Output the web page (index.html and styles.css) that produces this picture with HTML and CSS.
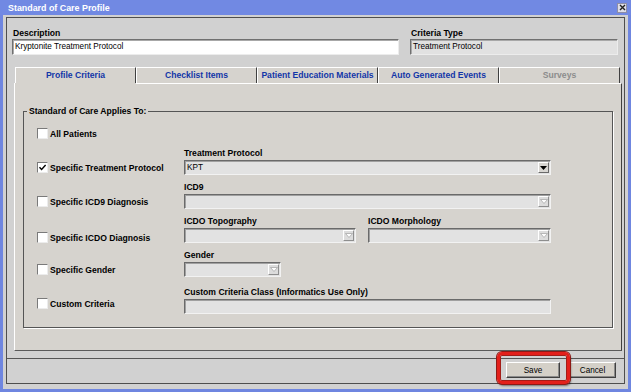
FILE: index.html
```html
<!DOCTYPE html>
<html>
<head>
<meta charset="utf-8">
<title>Standard of Care Profile</title>
<link rel="stylesheet" href="styles.css">
</head>
<body>
<div class="window">
  <div class="titlebar">
    <span class="title">Standard of Care Profile</span>
    <span class="close"><svg width="7" height="7" viewBox="0 0 7 7"><path d="M1 1L6 6M6 1L1 6" stroke="#222" stroke-width="1.4"/></svg></span>
  </div>
  <div class="frame">
    <div class="client">
      <div class="main">
        <div class="header">
          <div class="field">
            <span class="lbl">Description</span>
            <div class="input white">Kryptonite Treatment Protocol</div>
          </div>
          <div class="field">
            <span class="lbl">Criteria Type</span>
            <div class="input ro">Treatment Protocol</div>
          </div>
        </div>
        <div class="tabs">
          <div class="tab active">Profile Criteria</div>
          <div class="tab">Checklist Items</div>
          <div class="tab">Patient Education Materials</div>
          <div class="tab">Auto Generated Events</div>
          <div class="tab off">Surveys</div>
        </div>
        <div class="panel">
          <fieldset class="group">
            <legend>Standard of Care Applies To:</legend>
            <div class="rows">
              <div class="row">
                <span class="check"><span class="cb"></span>All Patients</span>
              </div>
              <div class="row">
                <span class="check"><span class="cb"><svg width="9" height="9" viewBox="0 0 9 9"><path d="M1.5 4.2L3.6 6.4L7.6 2" fill="none" stroke="#000" stroke-width="1.4"/></svg></span>Specific Treatment Protocol</span>
                <div class="fields">
                  <span class="flbl">Treatment Protocol</span>
                  <div class="combo"><span class="val">KPT</span><span class="arrow"><svg width="7" height="4" viewBox="0 0 7 4"><path d="M0 0H7L3.5 4Z" fill="#000"/></svg></span></div>
                </div>
              </div>
              <div class="row">
                <span class="check"><span class="cb"></span>Specific ICD9 Diagnosis</span>
                <div class="fields">
                  <span class="flbl">ICD9</span>
                  <div class="combo dis"><span class="val"></span><span class="arrow"><svg width="8" height="5" viewBox="0 0 8 5"><path d="M0.5 0.5H7.5L4 4.5Z" fill="#fdfdfd" stroke="#a8a8a8" stroke-width="0.8"/></svg></span></div>
                </div>
              </div>
              <div class="row icdo">
                <span class="check"><span class="cb"></span>Specific ICDO Diagnosis</span>
                <div class="fields split">
                  <div>
                    <span class="flbl">ICDO Topography</span>
                    <div class="combo dis"><span class="val"></span><span class="arrow"><svg width="8" height="5" viewBox="0 0 8 5"><path d="M0.5 0.5H7.5L4 4.5Z" fill="#fdfdfd" stroke="#a8a8a8" stroke-width="0.8"/></svg></span></div>
                  </div>
                  <div>
                    <span class="flbl">ICDO Morphology</span>
                    <div class="combo dis"><span class="val"></span><span class="arrow"><svg width="8" height="5" viewBox="0 0 8 5"><path d="M0.5 0.5H7.5L4 4.5Z" fill="#fdfdfd" stroke="#a8a8a8" stroke-width="0.8"/></svg></span></div>
                  </div>
                </div>
              </div>
              <div class="row">
                <span class="check"><span class="cb"></span>Specific Gender</span>
                <div class="fields">
                  <span class="flbl">Gender</span>
                  <div class="combo dis gender"><span class="val"></span><span class="arrow"><svg width="8" height="5" viewBox="0 0 8 5"><path d="M0.5 0.5H7.5L4 4.5Z" fill="#fdfdfd" stroke="#a8a8a8" stroke-width="0.8"/></svg></span></div>
                </div>
              </div>
              <div class="row last">
                <span class="check"><span class="cb"></span>Custom Criteria</span>
                <div class="fields">
                  <span class="flbl">Custom Criteria Class (Informatics Use Only)</span>
                  <div class="combo dis"><span class="val"></span></div>
                </div>
              </div>
            </div>
          </fieldset>
        </div>
      </div>
      <div class="buttonbar">
        <button class="btn save">Save</button>
        <button class="btn cancel">Cancel</button>
        <div class="highlight"></div>
      </div>
    </div>
  </div>
</div>
</body>
</html>
```
FILE: styles.css
```css
* { box-sizing: border-box; }
body {
  margin: 0;
  font-family: "Liberation Sans", Arial, sans-serif;
  background: #6f86e0;
}
.window {
  width: 631px;
  height: 392px;
  background: #6f86e0;
  display: flex;
  flex-direction: column;
}
.titlebar {
  height: 15px;
  flex: none;
  display: flex;
  align-items: center;
  justify-content: space-between;
  padding: 0 4px 0 8px;
  background: #7189e3;
  color: #fff;
  font-weight: bold;
  font-size: 8.9px;
}
.close {
  width: 10px;
  height: 10px;
  background: #dedee8;
  border: 1px solid #8e8ea6;
  display: flex;
  align-items: center;
  justify-content: center;
}
.close svg { display: block; }
.frame {
  flex: 1;
  margin: 0 3px 3px;
  background: #d1d1d1;
  padding: 2px 3px 5px;
  display: flex;
}
.client {
  flex: 1;
  border: 1px solid #4e4e4e;
  display: flex;
  flex-direction: column;
}
.main {
  height: 340px;
  flex: none;
}
.header {
  display: grid;
  grid-template-columns: 387px 208px;
  column-gap: 11px;
  padding: 10px 0 0 5px;
}
.lbl, .flbl {
  display: block;
  font-weight: bold;
  font-size: 8.6px;
  line-height: 11px;
  color: #000;
  white-space: nowrap;
}
.lbl { padding-left: 1px; }
.flbl { margin-bottom: 1px; }
.input {
  height: 16px;
  border: 1px solid;
  border-color: #707070 #ececec #ececec #707070;
  box-shadow: inset 1px 1px 0 #a8a8a8;
  font-size: 8.2px;
  line-height: 14px;
  padding-left: 2px;
  color: #000;
}
.input.white { background: #fff; }
.input.ro { background: #e1e1e1; }

.tabs {
  display: flex;
  margin: 12px 0 0 8px;
  width: 605px;
  height: 16px;
}
.tab {
  flex: 1;
  border-top: 1px solid #fff;
  border-left: 1px solid #fff;
  border-right: 1px solid #404040;
  text-align: center;
  font-weight: bold;
  font-size: 8.6px;
  line-height: 14px;
  color: #1236a8;
  background: #d6d3ce;
  white-space: nowrap;
}
.tab.active {
  position: relative;
  z-index: 1;
  box-shadow: 0 1px 0 #d6d3ce;
}
.tab.off { color: #8c8c8c; }

.panel {
  margin-left: 7px;
  width: 608px;
  height: 268px;
  border-top: 1px solid #fff;
  border-left: 1px solid #fff;
  border-right: 1px solid #404040;
  border-bottom: 1px solid #5a5a5a;
  background: #d6d3ce;
  padding: 0 0 0 8px;
}
.group {
  margin: 22px 0 0;
  width: 590px;
  padding: 9px 0 13px 3px;
  border: 1px solid #555;
  box-shadow: 1px 1px 0 #fff;
  min-inline-size: 0;
}
.group legend {
  padding: 0 2px;
  font-weight: bold;
  font-size: 8.6px;
  line-height: 11px;
  color: #000;
}
.rows {
  display: flex;
  flex-direction: column;
  gap: 7px;
  padding-left: 10px;
}
.row {
  display: flex;
  align-items: flex-end;
}
.row.last { margin-top: 3px; }
.row.last .check { margin-bottom: 3px; }
.row.icdo .check { margin-bottom: -2px; }
.check {
  width: 147px;
  flex: none;
  height: 15px;
  display: flex;
  align-items: center;
  gap: 2px;
  font-weight: bold;
  font-size: 8.6px;
  color: #000;
  white-space: nowrap;
}
.cb {
  width: 11px;
  height: 11px;
  flex: none;
  background: #fff;
  border: 1px solid;
  border-color: #7a7a7a #ececec #ececec #7a7a7a;
  display: flex;
  align-items: center;
  justify-content: center;
}
.cb svg { display: block; }
.fields { width: 367px; }
.fields.split {
  display: grid;
  grid-template-columns: 172px 183px;
  column-gap: 12px;
}
.combo {
  height: 15px;
  display: flex;
  align-items: center;
  border: 1px solid;
  border-color: #6a6a6a #f2f2f2 #f2f2f2 #6a6a6a;
  box-shadow: inset 1px 1px 0 #a0a0a0;
  background: #e2e2e2;
  padding: 1px;
}
.combo .val {
  flex: 1;
  font-size: 8.2px;
  line-height: 12px;
  padding-left: 1px;
  color: #000;
}
.combo.gender { width: 97px; }
.arrow {
  width: 11px;
  height: 11px;
  flex: none;
  display: flex;
  align-items: center;
  justify-content: center;
  background: #d8d6d2;
  border: 1px solid;
  border-color: #fff #6a6a6a #6a6a6a #fff;
}
.combo.dis .arrow { background: #dcdcdc; border-color: #fff #8e8e8e #8e8e8e #fff; }
.arrow svg { display: block; }

.buttonbar {
  flex: 1;
  border-top: 1px solid #555;
  display: flex;
  justify-content: flex-end;
  align-items: flex-start;
  gap: 9px;
  padding: 3px 8px 0 0;
  position: relative;
}
.btn {
  height: 16px;
  border: 1px solid;
  border-color: #fff #404040 #404040 #fff;
  box-shadow: inset -1px -1px 0 #8a8a8a;
  background: #d4d0c8;
  font-family: "Liberation Sans", Arial, sans-serif;
  font-size: 8.2px;
  color: #000;
  padding: 0;
}
.btn.save { width: 54px; }
.btn.cancel { width: 47px; }
.highlight {
  position: absolute;
  left: 490px;
  top: -7px;
  width: 73px;
  height: 32px;
  border: 3px solid #e3201b;
  border-radius: 5px;
  box-shadow: 0 0 0 1px #8d1a16, 1px 2px 2px rgba(0,0,0,0.45), inset 0 0 0 1px #a31d18;
}
```
